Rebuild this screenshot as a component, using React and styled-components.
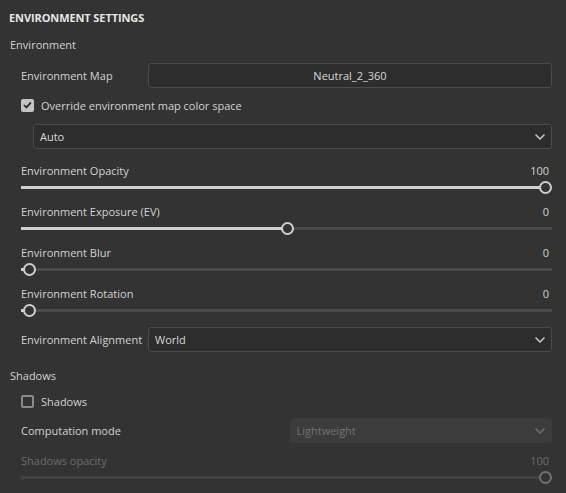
import React from "react";
import styled, { createGlobalStyle } from "styled-components";

const Global = createGlobalStyle`
  html, body { margin: 0; padding: 0; background: #333333; }
  body { font-family: "Open Sans", "Noto Sans", sans-serif; font-size: 11px; color: #d2d2d2; }
  * { box-sizing: border-box; }
`;

const Panel = styled.div`
  width: 566px;
  height: 493px;
  background: #333333;
  padding: 10px 14px 0 9px;
  display: flex;
  flex-direction: column;
  overflow: hidden;
`;

const Title = styled.div`
  font-weight: 700;
  font-size: 11px;
  line-height: 16px;
  color: #e6e6e6;
  letter-spacing: -0.1px;
`;

const SectionTitle = styled.div`
  line-height: 16px;
  margin-top: ${(p) => p.$mt}px;
  padding-left: 1px;
  color: #d2d2d2;
`;

const Body = styled.div`
  padding-left: 12px;
  display: flex;
  flex-direction: column;
`;

const FieldRow = styled.div`
  display: grid;
  grid-template-columns: ${(p) => p.$cols || "127px 1fr"};
  column-gap: ${(p) => p.$gap || 0}px;
  align-items: center;
  margin-top: ${(p) => p.$mt}px;
`;

const Label = styled.div`
  line-height: 16px;
  color: ${(p) => (p.$disabled ? "#6b6b6b" : "#d2d2d2")};
  white-space: nowrap;
`;

const Box = styled.div`
  height: 25px;
  border: 1px solid ${(p) => (p.$disabled ? "#3c3c3c" : "#4b4b4b")};
  background: ${(p) => (p.$disabled ? "#3c3c3c" : "#2d2d2d")};
  border-radius: 3px;
  display: flex;
  align-items: center;
  justify-content: ${(p) => (p.$center ? "center" : "space-between")};
  padding: 0 6px 0 6px;
  color: ${(p) => (p.$disabled ? "#737373" : "#d8d8d8")};
  margin-left: ${(p) => p.$ml || 0}px;
`;

const CheckRow = styled.label`
  display: flex;
  align-items: center;
  gap: 7px;
  height: 16px;
  margin-top: ${(p) => p.$mt}px;
`;

const CheckBox = styled.span`
  width: 13px;
  height: 13px;
  border-radius: 2px;
  display: flex;
  align-items: center;
  justify-content: center;
  background: ${(p) => (p.$checked ? "#c4c4c4" : "transparent")};
  border: ${(p) => (p.$checked ? "none" : "2px solid #8a8a8a")};
`;

const SliderBlock = styled.div`
  display: flex;
  flex-direction: column;
  margin-top: ${(p) => p.$mt}px;
`;

const SliderHead = styled.div`
  display: flex;
  justify-content: space-between;
  line-height: 16px;
  padding-right: 3px;
`;

const Value = styled.span`
  color: ${(p) => (p.$disabled ? "#6b6b6b" : "#d2d2d2")};
`;

const TrackRow = styled.div`
  position: relative;
  height: 12px;
  margin-top: 2px;
`;

const Track = styled.div`
  position: absolute;
  left: 0;
  right: 0;
  top: 5px;
  height: 3px;
  background: ${(p) => (p.$disabled ? "#434343" : "#4a4a4a")};
`;

const Fill = styled.div`
  position: absolute;
  left: 0;
  top: 5px;
  height: 3px;
  background: #cfcfcf;
`;

const Thumb = styled.div`
  position: absolute;
  top: 0;
  width: 13px;
  height: 13px;
  margin-left: -6.5px;
  border-radius: 50%;
  border: 2px solid ${(p) => (p.$disabled ? "#707070" : "#cfcfcf")};
  background: #333333;
`;

const Chevron = ({ color = "#c8c8c8" }) => (
  <svg width="10" height="6" viewBox="0 0 10 6">
    <path d="M1 1 L5 5 L9 1" fill="none" stroke={color} strokeWidth="1.6" strokeLinecap="round" strokeLinejoin="round" />
  </svg>
);

const Check = () => (
  <svg width="9" height="8" viewBox="0 0 9 8">
    <path d="M1 4 L3.4 6.4 L8 1.4" fill="none" stroke="#2a2a2a" strokeWidth="1.7" />
  </svg>
);

function Slider({ label, value, pct, mt, disabled }) {
  // thumb centers span 8px..(width-7px)
  const left = `calc(8px + (100% - 15px) * ${pct})`;
  return (
    <SliderBlock $mt={mt}>
      <SliderHead>
        <Label $disabled={disabled}>{label}</Label>
        <Value $disabled={disabled}>{value}</Value>
      </SliderHead>
      <TrackRow>
        <Track $disabled={disabled} />
        {!disabled && <Fill style={{ width: left }} />}
        <Thumb $disabled={disabled} style={{ left }} />
      </TrackRow>
    </SliderBlock>
  );
}

export default function App() {
  return (
    <>
      <Global />
      <Panel>
        <Title>ENVIRONMENT SETTINGS</Title>
        <SectionTitle $mt={11}>Environment</SectionTitle>
        <Body>
          <FieldRow $mt={10}>
            <Label>Environment Map</Label>
            <Box $center>Neutral_2_360</Box>
          </FieldRow>
          <CheckRow $mt={9}>
            <CheckBox $checked>
              <Check />
            </CheckBox>
            <span>Override environment map color space</span>
          </CheckRow>
          <FieldRow $cols="1fr" $mt={11}>
            <Box $ml={12}>
              <span>Auto</span>
              <Chevron />
            </Box>
          </FieldRow>
          <Slider label="Environment Opacity" value="100" pct={1} mt={14} />
          <Slider label="Environment Exposure (EV)" value="0" pct={0.5} mt={11} />
          <Slider label="Environment Blur" value="0" pct={0} mt={11} />
          <Slider label="Environment Rotation" value="0" pct={0} mt={11} />
          <FieldRow $mt={11}>
            <Label>Environment Alignment</Label>
            <Box>
              <span>World</span>
              <Chevron />
            </Box>
          </FieldRow>
        </Body>
        <SectionTitle $mt={16}>Shadows</SectionTitle>
        <Body>
          <CheckRow $mt={9}>
            <CheckBox />
            <span>Shadows</span>
          </CheckRow>
          <FieldRow $cols="1fr 1fr" $gap={6} $mt={9}>
            <Label>Computation mode</Label>
            <Box $disabled>
              <span>Lightweight</span>
              <Chevron color="#6e6e6e" />
            </Box>
          </FieldRow>
          <Slider label="Shadows opacity" value="100" pct={1} mt={10} disabled />
        </Body>
      </Panel>
    </>
  );
}
